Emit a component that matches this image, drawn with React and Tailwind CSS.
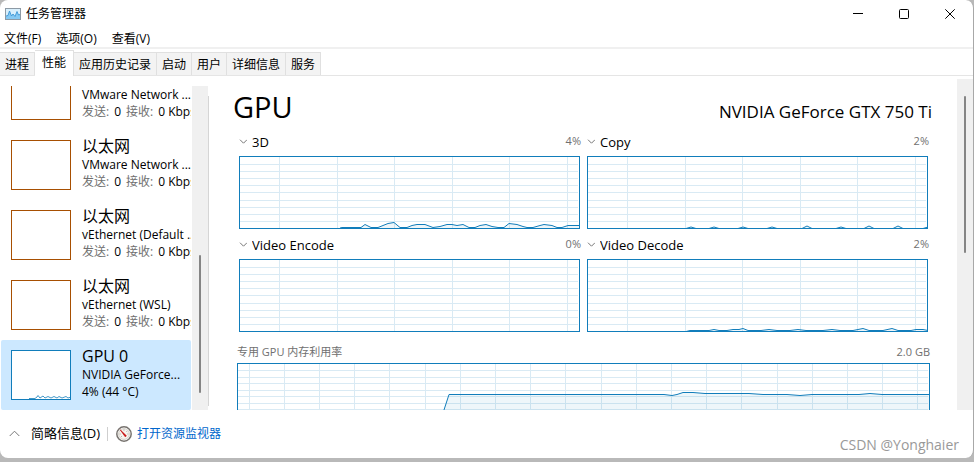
import { useState } from "react";
import clsx from "clsx";

const menus = ["文件(F)", "选项(O)", "查看(V)"];

const tabs = ["进程", "性能", "应用历史记录", "启动", "用户", "详细信息", "服务"];

const adapters = [
  { id: "vm1", title: "以太网", name: "VMware Network ..." },
  { id: "vm8", title: "以太网", name: "VMware Network ..." },
  { id: "vdef", title: "以太网", name: "vEthernet (Default ..." },
  { id: "wsl", title: "以太网", name: "vEthernet (WSL)" },
];

const engines = ["3D", "Copy", "Video Encode", "Video Decode"];

// Usage lines, in the coordinates of a 341 x 73 plot
const engineCharts = [
  {
    engine: "3D",
    value: "4%",
    points:
      "101,72 103,71.5 122,71.5 126,68.5 132,71.5 139,71.5 149,67.5 155,66.5 161,71.5 168,71.5 173,69.5 178,68.5 186,68.5 194,71.5 201,70.5 208,68.5 213,68.5 218,69.5 224,68.5 230,71.5 236,71.5 241,69.5 247,68.5 253,70.5 259,71.5 265,71.5 270,67.5 278,68.5 284,70.5 288,71.5 294,71.5 301,69.5 305,68.5 313,69.5 318,71.5 323,71.5 329,69.5 341,69.5",
  },
  {
    engine: "Copy",
    value: "2%",
    points:
      "99,72.5 104,71 109,72.5 122,72.5 127,71 132,72.5 151,72.5 156,71 161,72.5 180,72.5 185,71 190,72.5 215,72.5 220,70 225,72.5 249,72.5 254,71 259,72.5 277,72.5 282,70 287,72.5 306,72.5 311,70 316,72.5 336,72.5 341,71",
  },
  { engine: "Video Encode", value: "0%", points: "" },
  {
    engine: "Video Decode",
    value: "2%",
    points:
      "99,72.5 103,71.5 122,71.5 127,70.5 132,71.5 140,71.5 146,70.5 152,70.5 156,69.5 161,71.5 174,71.5 182,70.5 190,71.5 203,71.5 211,70.5 219,71.5 236,71.5 245,70.5 253,71.5 266,71.5 276,69.5 282,71.5 296,71.5 305,69.5 311,71.5 324,71.5 329,70.5 336,70.5 341,71.5",
  },
];

const engineGrid = {
  x: [40, 98, 155, 213, 270, 328],
  y: [8, 15, 22, 29, 36, 44, 51, 58, 65],
};

const memoryGrid = {
  x: [12, 47, 82, 117, 152, 188, 223, 258, 293, 328, 364, 399, 434, 469, 504, 540, 575, 610, 645, 680],
  y: [7, 14, 20, 27, 33, 40, 46, 53, 59],
};

const memoryPoints =
  "200,66 206,50 212,31.5 418,31.5 427,31.5 435,32.5 440,31.5 446,29.5 456,29.5 468,30.5 512,30.5 526,31.5 550,31.5 563,32.5 575,31.5 622,31.5 633,30.5 645,31.5 693,31.5";

function Chart({ width, height, grid, points, className }) {
  return (
    <svg
      viewBox={`0 0 ${width} ${height}`}
      preserveAspectRatio="none"
      className={clsx("block w-full", className)}
      aria-hidden="true"
    >
      <rect width={width} height={height} fill="#fff" />
      <g fill="#d9eaf4" shapeRendering="crispEdges">
        {grid.x.map((x) => (
          <rect key={x} x={x} y="0" width="1" height={height} />
        ))}
        {grid.y.map((y) => (
          <rect key={y} x="0" y={y} width={width - 2} height="1" />
        ))}
      </g>
      {points && (
        <>
          <polygon
            points={`${points} ${width},${height} ${points.split(",")[0]},${height}`}
            fill="#117dbb"
            fillOpacity="0.07"
          />
          <polyline
            points={points}
            fill="none"
            stroke="#117dbb"
            vectorEffect="non-scaling-stroke"
          />
        </>
      )}
      <rect
        x="0.5"
        y="0.5"
        width={width - 1}
        height={height - 1}
        fill="none"
        stroke="#117dbb"
        vectorEffect="non-scaling-stroke"
        shapeRendering="crispEdges"
      />
    </svg>
  );
}

function EngineChart({ engine, value, points }) {
  const [selected, setSelected] = useState(engine);

  return (
    <div>
      <div className="-mr-px flex h-[30px] items-center justify-between">
        <label className="flex items-center gap-[5px] pt-0.5">
          <svg width="8" height="6" viewBox="0 0 8 6" fill="none" stroke="#777">
            <path d="M1 0.7 L4.5 4.2 L8 0.7" />
          </svg>
          <select
            aria-label="GPU engine"
            value={selected}
            onChange={(e) => setSelected(e.target.value)}
            className="appearance-none bg-transparent text-[13px] leading-5 outline-none"
          >
            {engines.map((name) => (
              <option key={name}>{name}</option>
            ))}
          </select>
        </label>
        <span className="text-[11px] text-[#707070]">{value}</span>
      </div>
      <Chart width={341} height={73} grid={engineGrid} points={points} className="h-[73px]" />
    </div>
  );
}

function TitleBar() {
  return (
    <header className="flex h-[27px] shrink-0 items-center justify-between pl-[5px] pr-[18px]">
      <div className="flex items-center gap-[5px]">
        <svg width="16" height="12" viewBox="0 0 16 12">
          <rect x="0.5" y="0.5" width="15" height="11" fill="#d8effc" stroke="#8d9aa5" />
          <path d="M1 8 L3 7.5 L4.5 3 L6.5 8 L8 6 L10 8.5 L12 3.5 L13.5 7 L15 6.5 V11 H1 Z" fill="#85c9f3" />
          <path
            d="M1 8 L3 7.5 L4.5 3 L6.5 8 L8 6 L10 8.5 L12 3.5 L13.5 7 L15 6.5"
            fill="none"
            stroke="#3a95d6"
            strokeWidth="0.9"
          />
        </svg>
        <h1 className="text-xs">任务管理器</h1>
      </div>
      <div className="flex items-center gap-9">
        <button aria-label="最小化">
          <svg width="10" height="10" viewBox="0 0 10 10">
            <path d="M0 4.5 H10" stroke="#000" />
          </svg>
        </button>
        <button aria-label="最大化">
          <svg width="10" height="10" viewBox="0 0 10 10" fill="none" stroke="#000">
            <rect x="0.5" y="0.5" width="9" height="9" rx="1" />
          </svg>
        </button>
        <button aria-label="关闭">
          <svg width="10" height="10" viewBox="0 0 10 10" stroke="#000">
            <path d="M0.3 0.3 L9.7 9.7 M9.7 0.3 L0.3 9.7" />
          </svg>
        </button>
      </div>
    </header>
  );
}

function Sidebar({ selected, onSelect }) {
  return (
    <aside className="flex w-[209px] shrink-0 pt-[10px]">
      <div className="flex min-w-0 flex-1 flex-col justify-end overflow-hidden pl-px">
        {adapters.map((item) => (
          <button
            key={item.id}
            onClick={() => onSelect(item.id)}
            className={clsx(
              "flex h-[70px] shrink-0 gap-[11px] overflow-hidden whitespace-nowrap rounded-xs py-[10px] pl-[10px] text-left",
              selected === item.id && "bg-[#cce8ff]"
            )}
          >
            <span className="h-[50px] w-[60px] shrink-0 border border-[#a74f01] bg-white" />
            <span className="-mt-1 flex flex-col">
              <span className="text-base leading-5">{item.title}</span>
              <span className="text-xs leading-[17px]">{item.name}</span>
              <span className="flex gap-[5px] text-xs leading-[17px]">
                <span className="text-[#707070]">发送:</span>
                <span>0</span>
                <span className="text-[#707070]">接收:</span>
                <span>0 Kbps</span>
              </span>
            </span>
          </button>
        ))}
        <button
          onClick={() => onSelect("gpu")}
          className={clsx(
            "flex h-[70px] shrink-0 gap-[11px] overflow-hidden whitespace-nowrap rounded-xs py-[10px] pl-[10px] text-left",
            selected === "gpu" && "bg-[#cce8ff]"
          )}
        >
          <svg width="60" height="50" viewBox="0 0 60 50" className="shrink-0">
            <rect x="0.5" y="0.5" width="59" height="49" fill="#fff" stroke="#117dbb" />
            <path
              d="M18 48.5 H24 L26 47 L27 45.5 L29 48 L32 46 L34 48 L37 46.5 L40 48 L43 46.5 L46 48 L48 46.5 L51 48 L55 46.5 L57 48 L60 47"
              fill="none"
              stroke="#117dbb"
              strokeWidth="0.8"
            />
          </svg>
          <span className="-mt-1 flex flex-col">
            <span className="text-base leading-5">GPU 0</span>
            <span className="text-xs leading-[17px]">NVIDIA GeForce...</span>
            <span className="text-xs leading-[17px]">4% (44 °C)</span>
          </span>
        </button>
      </div>
      <div className="ml-px flex w-4 flex-col items-center bg-[#f0f0f0] pb-[17px]">
        <div className="mt-auto h-[138px] w-0.5 rounded-full bg-[#858585]" />
      </div>
      <div className="mb-1 mt-[10px] w-px bg-[#d5d5d5]" />
    </aside>
  );
}

export default function App() {
  const [activeTab, setActiveTab] = useState("性能");
  const [selected, setSelected] = useState("gpu");

  return (
    <div className="h-screen bg-[#b9b9b9] pb-1 font-['Open_Sans','Noto_Sans_CJK_SC',sans-serif] text-black">
      <div className="relative flex h-full flex-col overflow-hidden rounded-lg border-r border-[#a8a8a8] bg-white">
        <TitleBar />

        <nav className="flex h-[22px] shrink-0 items-center gap-[15px] border-b-2 border-[#f0f0f0] pl-1 pt-1">
          {menus.map((menu) => (
            <button key={menu} className="text-xs">
              {menu}
            </button>
          ))}
        </nav>

        <div role="tablist" className="flex h-[27px] shrink-0 items-end border-b border-[#e5e5e5]">
          {tabs.map((tab) => (
            <button
              key={tab}
              role="tab"
              aria-selected={activeTab === tab}
              onClick={() => setActiveTab(tab)}
              className={clsx(
                "border-r border-t border-[#e0e0e0] text-xs",
                activeTab === tab
                  ? "-mb-px h-[26px] bg-white px-[7px] pb-0.5"
                  : "h-[23px] bg-[#f3f3f3] px-[5px] pt-0.5"
              )}
            >
              {tab}
            </button>
          ))}
        </div>

        <div className="flex min-h-0 flex-1">
          <Sidebar selected={selected} onSelect={setSelected} />

          <main className="min-w-0 flex-1 overflow-hidden pl-6 pr-[25px] pt-[10px]">
            <div className="flex h-10 items-center justify-between">
              <h2 className="pt-0.5 text-[29px] leading-10">GPU</h2>
              <span className="pt-3 text-[17px] leading-6">NVIDIA GeForce GTX 750 Ti</span>
            </div>

            <div className="grid grid-cols-2 gap-x-[7px] pl-1.5 pr-1">
              {engineCharts.map((chart) => (
                <EngineChart key={chart.engine} {...chart} />
              ))}
            </div>

            <div className="pl-1 pr-0.5">
              <div className="flex h-[31px] items-center justify-between pt-2.5 text-[11px] text-[#707070]">
                <span>专用 GPU 内存利用率</span>
                <span>2.0 GB</span>
              </div>
              <Chart width={693} height={66} grid={memoryGrid} points={memoryPoints} className="h-[66px]" />
            </div>
          </main>

          <div className="mt-[3px] flex w-4 shrink-0 flex-col items-center bg-[#f0f0f0] pt-[17px]">
            <div className="h-[157px] w-0.5 rounded-full bg-[#858585]" />
          </div>
        </div>

        <footer className="flex h-12 shrink-0 items-center pl-[9px]">
          <button className="flex items-center gap-[11px] text-[13px]">
            <svg width="11" height="8" viewBox="0 0 11 8" fill="none" stroke="#777">
              <path d="M0.7 6 L5.5 1.2 L10.3 6" />
            </svg>
            简略信息(D)
          </button>
          <span className="ml-[7px] mr-2 h-[14px] w-px bg-[#cfcfcf]" />
          <a href="#resmon" className="flex items-center gap-[5px] text-xs text-[#0066cc]">
            <svg width="16" height="16" viewBox="0 0 16 16">
              <circle cx="8" cy="8" r="7.2" fill="#fff" stroke="#77736f" strokeWidth="1.5" />
              <circle cx="8" cy="8" r="5.4" fill="#f7f4ee" stroke="#c9c4bb" strokeWidth="0.8" />
              <path d="M4.2 3.8 L10.4 9.8 L9.2 10.8 Z" fill="#d21010" stroke="#b00" strokeWidth="0.6" />
              <path d="M8 3.5 V4.5 M11.2 5 L10.6 5.6 M12.3 8 H11.5 M3.7 8 H4.5 M5 11 L5.6 10.4" stroke="#777" strokeWidth="0.8" />
            </svg>
            打开资源监视器
          </a>
        </footer>

        <span className="absolute bottom-[3px] right-[14px] text-sm leading-5 text-[#999]">CSDN @Yonghaier</span>
      </div>
    </div>
  );
}
